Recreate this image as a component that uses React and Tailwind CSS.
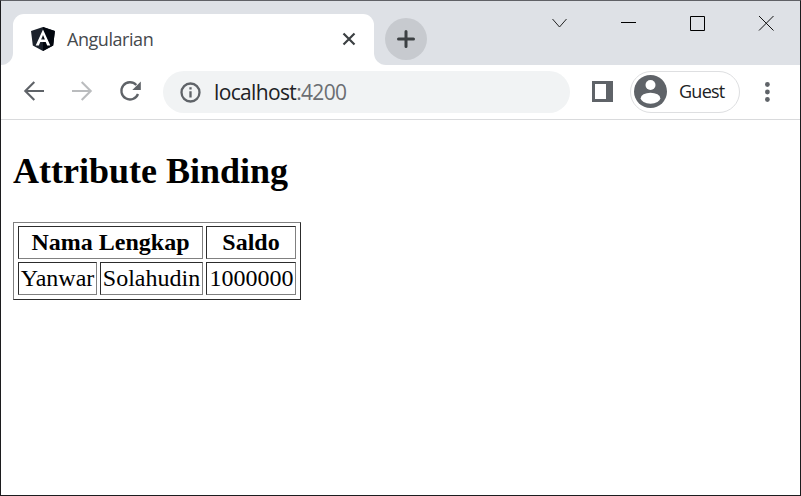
function AngularLogo() {
  return (
    <svg className="shrink-0" width="24" height="24" viewBox="0 0 24 24">
      <path d="M12 0 23.900 4 22.200 18.600 12 24 1.800 18.600 0 4Z" fill="#1b212b" />
      <path d="M12 0 23.900 4 22.200 18.600 12 24Z" fill="#02060e" />
      <path d="M12 2.600 4.700 18.600h3.100l1.500-3.500h5.400l1.500 3.500h3.100ZM12 8l1.900 4.500h-3.800Z" fill="#fff" fillRule="evenodd" />
    </svg>
  );
}

function TabStrip() {
  return (
    <div className="flex h-16 shrink-0">
      <div className="w-3 rounded-br-xl bg-[#dee1e6]" />
      <div className="w-[361px] bg-[#dee1e6] pt-[13px]">
        <div className="flex h-[51px] items-start rounded-t-[11px] bg-white pt-[13px] pl-[18px]">
          <AngularLogo />
          <span className="ml-3 text-[18px] leading-6 tracking-[-0.45px] text-[#45494d]">Angularian</span>
          <svg className="mt-[5px] mr-[18px] ml-auto" width="14" height="14" viewBox="0 0 14 14" stroke="#3c4043" strokeWidth="2.2">
            <path d="m1.500 1.500 11 11m0-11-11 11" />
          </svg>
        </div>
      </div>
      <div className="flex flex-1 rounded-bl-xl bg-[#dee1e6] pl-[11px]">
        <div className="mt-[17px] flex size-[42px] items-center justify-center rounded-full bg-[#c7cacf]">
          <svg width="18" height="18" viewBox="0 0 18 18" stroke="#3c4043" strokeWidth="3" strokeLinecap="round">
            <path d="M9 1.500v15M1.500 9h15" />
          </svg>
        </div>
        <div className="mt-[14px] mr-[26px] ml-auto flex h-4 gap-[53px]">
          <svg width="16" height="16" viewBox="0 0 16 16" fill="none" stroke="#222">
            <path d="m1.500 4 7 8 7-8" />
          </svg>
          <svg width="16" height="16" viewBox="0 0 16 16" stroke="#000">
            <path d="M1 7.500h15" />
          </svg>
          <svg width="16" height="16" viewBox="0 0 16 16" fill="none" stroke="#000">
            <path d="M1.500 1.500h14v14h-14z" />
          </svg>
          <svg width="16" height="16" viewBox="0 0 16 16" stroke="#111">
            <path d="m1 1 14.500 14.500M15.500 1 1 15.500" />
          </svg>
        </div>
      </div>
    </div>
  );
}

function Toolbar() {
  return (
    <div className="flex h-[55px] shrink-0 items-center border-b border-[#d9dadc] pl-[22px]">
      <svg className="-mt-[2px]" width="22" height="22" viewBox="0 0 22 22" fill="none" stroke="#5f6368" strokeWidth="2.1">
        <path d="M21 11H2.500M11.300 2 2.300 11l9 9" />
      </svg>
      <svg className="-mt-[2px] ml-[26px]" width="22" height="22" viewBox="0 0 22 22" fill="none" stroke="#babcbe" strokeWidth="2.1">
        <path d="M1 11h18.500M10.700 2l9 9-9 9" />
      </svg>
      <svg className="-mt-[2px] ml-[26px]" width="22" height="22" viewBox="0 0 22 22" fill="none">
        <path d="M17.300 5A8.600 8.600 0 1 0 19 14" stroke="#5f6368" strokeWidth="2.300" />
        <path d="M21.800 1.500v8.500h-8.500Z" fill="#5f6368" />
      </svg>
      <div className="ml-[22px] flex h-[42px] w-[407px] items-center rounded-full bg-[#f1f3f4] pl-[17px]">
        <svg width="21" height="21" viewBox="0 0 21 21" fill="none" stroke="#5f6368" strokeWidth="2.300">
          <circle cx="10.500" cy="10.500" r="9" />
          <path d="M10.500 9.300v6.200M10.500 5.300v2.200" />
        </svg>
        <span className="ml-[13px] text-[21px] leading-7 tracking-[-0.65px] text-[#202124]">
          localhost<span className="text-[#6b6e72]">:4200</span>
        </span>
      </div>
      <svg className="-mt-px ml-[22px]" width="21" height="21" viewBox="0 0 21 21">
        <path d="M0 0h21v21H0zM3 3v15h11V3z" fill="#5f6368" fillRule="evenodd" />
      </svg>
      <div className="ml-[17px] flex h-[42px] w-[110px] items-center rounded-full border border-[#dedfe1] pl-[3px]">
        <svg className="-mt-px shrink-0" width="33" height="33" viewBox="0 0 33 33">
          <circle cx="16.500" cy="16.500" r="16.500" fill="#5f6368" />
          <circle cx="16.500" cy="10" r="5" fill="#fff" />
          <ellipse cx="16.500" cy="23.200" rx="9.800" ry="5.500" fill="#fff" />
        </svg>
        <span className="-mt-[2px] ml-3 text-[18px] leading-6 tracking-[-0.75px] text-[#202124]">Guest</span>
      </div>
      <svg className="-mt-px ml-[24px]" width="7" height="20" viewBox="0 0 7 20" fill="#5f6368">
        <circle cx="3.400" cy="2.500" r="2.400" />
        <circle cx="3.400" cy="10" r="2.400" />
        <circle cx="3.400" cy="17.500" r="2.400" />
      </svg>
    </div>
  );
}

const cell =
  "h-[33px] border border-t-[#2c2c2c] border-r-[#808080] border-b-[#808080] border-l-[#2c2c2c] py-[2px] text-center text-[24px] leading-[27px] whitespace-nowrap";

function Page() {
  return (
    <main className="flex flex-1 flex-col items-start pt-[31px] pl-3 font-['Liberation_Serif',serif] text-black">
      <h2 className="text-[36px] leading-[41px] font-bold">Attribute Binding</h2>
      <table className="mt-[30px] grid h-[78px] w-[288px] grid-cols-[79px_103px_90px] content-start gap-[3px] border border-t-[#808080] border-r-[#2c2c2c] border-b-[#2c2c2c] border-l-[#808080] pt-[3px] pl-1">
        <thead className="contents">
          <tr className="contents">
            <th colSpan={2} className={`${cell} col-span-2 font-bold`}>Nama Lengkap</th>
            <th className={`${cell} font-bold`}>Saldo</th>
          </tr>
        </thead>
        <tbody className="contents">
          <tr className="contents">
            <td className={cell}>Yanwar</td>
            <td className={cell}>Solahudin</td>
            <td className={`${cell} pl-px`}>1000000</td>
          </tr>
        </tbody>
      </table>
    </main>
  );
}

export default function App() {
  return (
    <div className="flex h-[496px] w-[801px] flex-col overflow-hidden border border-[#1c1c1e] border-t-[#606166] bg-white font-['Open_Sans','Noto_Sans',sans-serif]">
      <TabStrip />
      <Toolbar />
      <Page />
    </div>
  );
}
